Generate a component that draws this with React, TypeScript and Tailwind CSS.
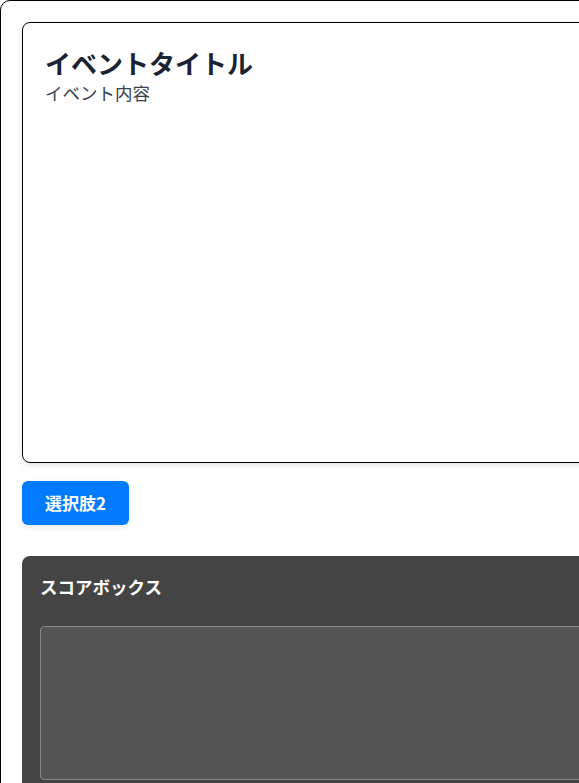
import React from "react";

export default function App() {
  return (
    <div className="w-[579px] h-[783px] overflow-hidden bg-white" style={{ fontFamily: '"Noto Sans CJK JP", "Noto Sans", sans-serif' }}>
      <div className="w-[900px] min-h-[900px] border border-black rounded-[10px] p-[21px]">
        <div className="h-[441px] border border-black rounded-[8px] px-[22px] pt-[21px] shadow-[0_2px_6px_rgba(0,0,0,0.12)]">
          <h1 className="text-[26px] font-bold leading-[38px] text-[#1a2332]">イベントタイトル</h1>
          <p className="text-[17.5px] leading-[1.3] text-[#374151]">イベント内容</p>
        </div>
        <div className="mt-[18px]">
          <button className="h-[44px] px-[23px] rounded-[6px] bg-[#007bff] text-white text-[17px] font-bold shadow-[0_2px_6px_rgba(0,0,0,0.1)]">
            選択肢2
          </button>
        </div>
        <div className="mt-[31px] bg-[#444444] rounded-[8px] p-[18px]">
          <h2 className="text-[17.5px] font-bold text-white leading-[1.3] mt-[2px]">スコアボックス</h2>
          <div className="mt-[27px] h-[154px] bg-[#555555] border border-[#888888] rounded-[4px]" />
        </div>
      </div>
    </div>
  );
}
